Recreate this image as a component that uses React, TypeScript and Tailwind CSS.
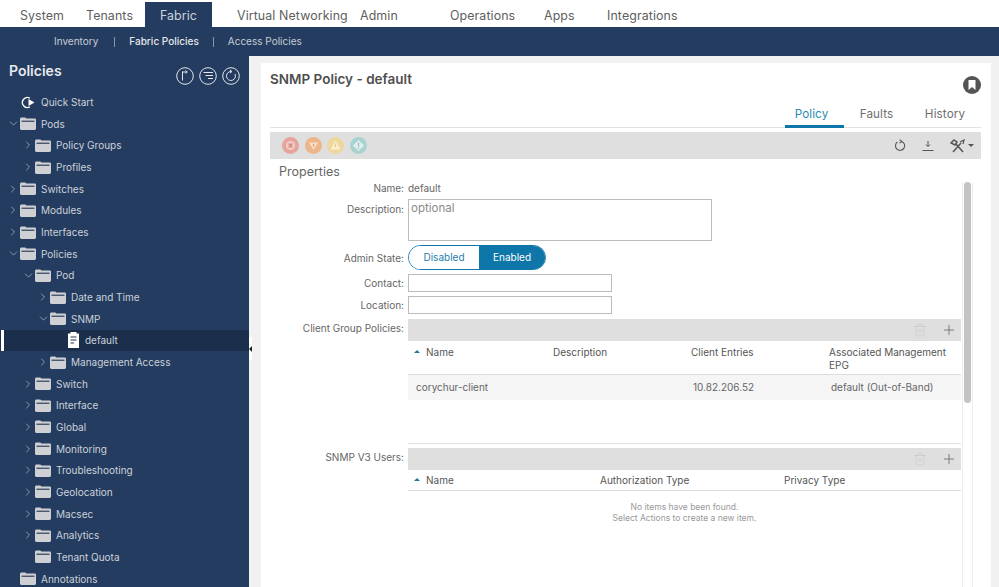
import React from "react";
import { ChevronRight, ChevronDown, Plus, Trash2 } from "lucide-react";

function Folder() {
  return (
    <svg width="16" height="13" viewBox="0 0 16 13" className="shrink-0">
      <path d="M0 2.2 C0 1 .6.4 1.6.4 H5.2 L6.6 1.6 H14.6 C15.5 1.6 16 2.1 16 3 V11.6 C16 12.5 15.5 13 14.6 13 H1.4 C.5 13 0 12.5 0 11.6 Z" fill="#cfd0d4" />
      <rect x="1.5" y="3.6" width="13" height="1.3" fill="#3c4c66" />
    </svg>
  );
}

type Row = { label: string; depth: number; chev?: "r" | "d"; kind?: "folder" | "start" | "doc"; active?: boolean };

const rows: Row[] = [
  { label: "Quick Start", depth: 1, kind: "start" },
  { label: "Pods", depth: 1, chev: "d" },
  { label: "Policy Groups", depth: 2, chev: "r" },
  { label: "Profiles", depth: 2, chev: "r" },
  { label: "Switches", depth: 1, chev: "r" },
  { label: "Modules", depth: 1, chev: "r" },
  { label: "Interfaces", depth: 1, chev: "r" },
  { label: "Policies", depth: 1, chev: "d" },
  { label: "Pod", depth: 2, chev: "d" },
  { label: "Date and Time", depth: 3, chev: "r" },
  { label: "SNMP", depth: 3, chev: "d" },
  { label: "default", depth: 4, kind: "doc", active: true },
  { label: "Management Access", depth: 3, chev: "r" },
  { label: "Switch", depth: 2, chev: "r" },
  { label: "Interface", depth: 2, chev: "r" },
  { label: "Global", depth: 2, chev: "r" },
  { label: "Monitoring", depth: 2, chev: "r" },
  { label: "Troubleshooting", depth: 2, chev: "r" },
  { label: "Geolocation", depth: 2, chev: "r" },
  { label: "Macsec", depth: 2, chev: "r" },
  { label: "Analytics", depth: 2, chev: "r" },
  { label: "Tenant Quota", depth: 2 },
  { label: "Annotations", depth: 1 },
];

const indent: Record<number, string> = { 1: "pl-[7px]", 2: "pl-[22px]", 3: "pl-[37px]", 4: "pl-[52px]" };

function TreeRow({ r }: { r: Row }) {
  return (
    <div className={`relative flex items-center h-[21.67px] shrink-0 ${indent[r.depth]} ${r.active ? "bg-[#1b2f4d]" : ""}`}>
      {r.active && <div className="absolute left-[1px] top-0 bottom-0 w-[3px] bg-white" />}
      <div className="w-[13px] shrink-0 flex items-center">
        {r.chev === "r" && <ChevronRight size={12} strokeWidth={1.3} color="#c3c9d3" />}
        {r.chev === "d" && <ChevronDown size={13} strokeWidth={1.2} color="#c3c9d3" />}
      </div>
      {r.kind === "start" ? (
        <svg width="16" height="13" viewBox="0 0 16 13" fill="none" className="shrink-0">
          <path d="M10 2.2 A5 5 0 1 0 10 10.8" stroke="#fff" strokeWidth="1.3" />
          <path d="M8.5 3 L14.5 6.5 L8.5 10 Z" fill="#fff" />
        </svg>
      ) : r.kind === "doc" ? (
        <div className="w-[16px] flex justify-center shrink-0">
          <svg width="11" height="16" viewBox="0 0 11 16">
            <path d="M0 1.5 H2.5 V0 H8.5 V1.5 H11 V16 H0 Z" fill="#fff" />
            <path d="M2.5 5 H8.5 M2.5 8 H8.5 M2.5 11 H6" stroke="#24395a" strokeWidth="1.2" />
          </svg>
        </div>
      ) : (
        <Folder />
      )}
      <span className={`text-[10px] text-[#ccd2db] pt-px ${r.kind === "doc" ? "ml-[4px]" : "ml-[5px]"}`}>{r.label}</span>
    </div>
  );
}

function CircleIcon({ children }: { children: React.ReactNode }) {
  return (
    <svg width="18" height="18" viewBox="0 0 18 18" fill="none" stroke="#e3e6ea" strokeWidth="1">
      <circle cx="9" cy="9" r="8.3" />
      {children}
    </svg>
  );
}

function Fault({ color, children }: { color: string; children: React.ReactNode }) {
  return (
    <svg width="17" height="17" viewBox="0 0 17 17">
      <circle cx="8.5" cy="8.5" r="8.5" fill={color} />
      {children}
    </svg>
  );
}

function Bar() {
  return (
    <div className="h-[22px] bg-[#dfdfdf] flex items-center justify-end pr-[4px] gap-[14px]">
      <Trash2 size={14} strokeWidth={1.2} color="#c8c8c8" />
      <Plus size={16} strokeWidth={1.2} color="#666" />
    </div>
  );
}

function FormRow({ label, h, lead, className, children }: { label: string; h: string; lead?: string; className?: string; children?: React.ReactNode }) {
  return (
    <div className={`flex ${h} ${className ?? ""}`}>
      <div className={`w-[138px] pr-[4px] text-right text-[10px] text-[#666] shrink-0 ${lead ?? "leading-[18px]"}`}>{label}</div>
      <div className="flex-1 min-w-0">{children}</div>
    </div>
  );
}

function Th({ w, sort, children }: { w: string; sort?: boolean; children: React.ReactNode }) {
  return (
    <div className={`${w} shrink-0 flex text-[10px] text-[#555] leading-[13px]`}>
      {sort && <span className="w-[6px] h-[3px] mt-[4px] ml-[6px] mr-[6px] border-x-[3px] border-x-transparent border-b-[3px] border-b-[#24789f]" />}
      <span>{children}</span>
    </div>
  );
}

export default function App() {
  return (
    <div className="w-[999px] h-[587px] overflow-hidden bg-white flex flex-col font-['Inter',sans-serif]">
      <div className="h-[27px] flex shrink-0 bg-white text-[12.4px] text-[#5e5e5e] tracking-[0.1px]">
        <div className="w-[86px] pl-[20px] pt-[7px]">System</div>
        <div className="w-[59px] pt-[7px]">Tenants</div>
        <div className="w-[67px] mt-[2px] pt-[5px] text-center bg-[#243c5f] text-[#ccd2db]">Fabric</div>
        <div className="w-[148px] pl-[25px] pt-[7px] whitespace-nowrap">Virtual Networking</div>
        <div className="w-[90px] pt-[7px]">Admin</div>
        <div className="w-[94px] pt-[7px]">Operations</div>
        <div className="w-[63px] pt-[7px]">Apps</div>
        <div className="pt-[7px]">Integrations</div>
      </div>
      <div className="h-[29px] shrink-0 flex items-center text-[10px] text-[#c6ccd6] pl-[54px] bg-[#243c5f]">
        <span>Inventory</span>
        <span className="w-px h-[10px] bg-[#8a98ad] ml-[16px] mr-[14px]" />
        <span className="font-medium text-[#e4e7eb]">Fabric Policies</span>
        <span className="w-px h-[10px] bg-[#8a98ad] ml-[14px] mr-[14px]" />
        <span>Access Policies</span>
      </div>
      <div className="flex-1 min-h-0 flex">
        <div className="w-[249px] shrink-0 flex flex-col bg-[#243c5f]">
          <div className="h-[35.3px] shrink-0 flex justify-between pl-[9px] pr-[9px] pt-[5px]">
            <span className="text-[14px] font-semibold text-[#e6e9ed] leading-[20px]">Policies</span>
            <div className="flex gap-[5px] pt-[6px]">
              <CircleIcon><path d="M6.5 13.5 V4.5 M6.5 5 H11 M9.5 3.6 L11.3 5 L9.5 6.4" /></CircleIcon>
              <CircleIcon><path d="M4.5 5.5 H14 M6.5 8.5 H14 M9 11.5 H14" /></CircleIcon>
              <CircleIcon><path d="M9 4.5 A4.5 4.5 0 1 0 13 7" /><path d="M8 3 L10 4.5 L8 6" /></CircleIcon>
            </div>
          </div>
          <div className="flex flex-col">
            {rows.map((r) => <TreeRow key={r.label} r={r} />)}
          </div>
        </div>
        <div className="flex-1 min-w-0 bg-[#f1f1f1] pl-[12px] pr-[8px] flex relative">
          <div className="absolute left-0 top-[281px] w-[3px] h-[23px] bg-white flex items-center">
            <span className="w-0 h-0 border-y-[3px] border-y-transparent border-r-[3px] border-r-[#222]" />
          </div>
          <div className="flex-1 min-w-0 bg-white pl-[9px] pr-[10px] relative flex flex-col mt-[7px]">
            <div className="h-[34px] pt-[6px] text-[13.5px] font-semibold text-[#4f4f4f] leading-[20px] shrink-0 box-content">SNMP Policy - default</div>
            <svg width="18" height="18" viewBox="0 0 18 18" className="absolute right-[10px] top-[13px]">
              <circle cx="9" cy="9" r="9" fill="#555" />
              <path d="M5.5 4 H12.5 V14 L9 11 L5.5 14 Z" fill="#fff" />
            </svg>
            <div className="h-[25px] shrink-0 flex justify-end border-b border-[#e3e3e3] text-[11.7px] leading-[16px] text-[#6e6e6e] tracking-[0.1px]">
              <div className="w-[59px] text-center text-[#2b8ab5] border-b-[3px] border-[#0e76a8] h-[25px] pt-[3px] pr-[6px]">Policy</div>
              <div className="w-[65px] text-center pt-[3px]">Faults</div>
              <div className="w-[72px] text-center pt-[3px]">History</div>
            </div>
            <div className="mt-[4px] h-[27px] shrink-0 bg-[#dfdfdf] flex items-center pl-[12px] pr-[7px]">
              <div className="flex gap-[5.5px]">
                <Fault color="#e6a49c"><circle cx="8.5" cy="8.5" r="4.6" fill="#f0cbc6" /><path d="M6.6 6.6 L10.4 10.4 M10.4 6.6 L6.6 10.4" stroke="#d98a80" strokeWidth="1.4" /></Fault>
                <Fault color="#ecb68a"><path d="M4 5.5 H13 L8.5 13 Z" fill="#f6e0cc" /><path d="M8.5 6.8 V9.6" stroke="#e4a26a" strokeWidth="1.3" /></Fault>
                <Fault color="#eed79a"><path d="M8.5 3.5 L13.5 12.5 H3.5 Z" fill="#f8efd4" /><path d="M8.5 6.5 V10" stroke="#e8cc78" strokeWidth="1.3" /></Fault>
                <Fault color="#a9d3d0"><path d="M8.5 3 L14 8.5 L8.5 14 L3 8.5 Z" fill="#e2efee" /><path d="M8.5 5.5 V9.5 M8.5 10.5 V11.8" stroke="#8cc4bf" strokeWidth="1.3" /></Fault>
              </div>
              <div className="ml-auto flex items-center gap-[16px] text-[#555]">
                <svg width="12" height="13" viewBox="0 0 12 13" fill="none" stroke="#555" strokeWidth="1.1">
                  <path d="M7.6 2.4 A4.6 4.6 0 1 1 3.4 3" />
                  <path d="M5.6 .6 L7.8 2.4 L5.6 4" />
                </svg>
                <svg width="12" height="12" viewBox="0 0 12 12" fill="none" stroke="#555" strokeWidth="1">
                  <path d="M6 1 V6 M4 4.5 L6 6.7 L8 4.5 M.5 10.5 H11.5" />
                </svg>
                <div className="flex items-center gap-[2px]">
                  <svg width="16" height="14" viewBox="0 0 16 14" fill="none" stroke="#555">
                    <path d="M3 13 L11 4 M1 4 L4 1 L7 3 L5 6 Z M13 13 L6 5" strokeWidth="1.5" />
                    <path d="M10 3 L14 1 L13 5" strokeWidth="1.2" />
                  </svg>
                  <span className="w-0 h-0 border-x-[3px] border-x-transparent border-t-[3px] border-t-[#555]" />
                </div>
              </div>
            </div>
            <div className="h-[23px] shrink-0 pl-[9px] pt-[5px] text-[12.5px] leading-[16px] text-[#666]">Properties</div>
            <div className="relative flex-1 min-h-0 overflow-hidden flex">
              <div className="flex-1 min-w-0 pr-[20px]">
                <FormRow label="Name:" h="h-[17px]" lead="leading-[13px]">
                  <div className="text-[10px] text-[#666] leading-[13px]">default</div>
                </FormRow>
                <FormRow label="Description:" h="h-[46px]" lead="leading-[20px]">
                  <div className="w-[304px] h-[42px] border border-[#bcbcbc] pl-[2px] text-[11.5px] leading-[16px] text-[#8a8a8a]">optional</div>
                </FormRow>
                <FormRow label="Admin State:" h="h-[29px]" lead="leading-[26px]">
                  <div className="flex w-[138px] h-[25px] rounded-full overflow-hidden border border-[#0e76a8] text-[10px]">
                    <div className="w-[70px] bg-white text-[#1f7fae] flex items-center justify-center">Disabled</div>
                    <div className="flex-1 bg-[#0e76a8] text-white flex items-center justify-center">Enabled</div>
                  </div>
                </FormRow>
                <FormRow label="Contact:" h="h-[22px]">
                  <div className="w-[204px] h-[18px] border border-[#bcbcbc] bg-white" />
                </FormRow>
                <FormRow label="Location:" h="h-[23px]">
                  <div className="w-[204px] h-[18px] border border-[#bcbcbc] bg-white" />
                </FormRow>
                <FormRow label="Client Group Policies:" h="h-[129px]">
                  <div className="border-b border-[#e3e3e3] h-[125px]">
                    <Bar />
                    <div className="flex h-[34px] pt-[5px] border-b border-[#dcdcdc]">
                      <Th w="w-[145px]" sort>Name</Th>
                      <Th w="w-[138px]">Description</Th>
                      <Th w="w-[138px]">Client Entries</Th>
                      <Th w="w-[125px]">Associated Management EPG</Th>
                    </div>
                    <div className="flex h-[25px] items-center bg-[#f5f5f5] text-[10px] text-[#666]">
                      <div className="w-[285px] pl-[8px]">corychur-client</div>
                      <div className="w-[138px]">10.82.206.52</div>
                      <div>default (Out-of-Band)</div>
                    </div>
                  </div>
                </FormRow>
                <FormRow label="SNMP V3 Users:" h="h-[110px]">
                  <Bar />
                  <div className="flex h-[21px] items-center border-b border-[#dcdcdc]">
                    <Th w="w-[192px]" sort>Name</Th>
                    <Th w="w-[184px]">Authorization Type</Th>
                    <Th w="w-[120px]">Privacy Type</Th>
                  </div>
                  <div className="pt-[11px] text-center text-[8.5px] leading-[11px] text-[#999]">
                    <div>No items have been found.</div>
                    <div>Select Actions to create a new item.</div>
                  </div>
                </FormRow>
              </div>
              <div className="absolute right-[8px] top-0 bottom-0 w-[11px] border-x border-[#eeeeee]">
                <div className="mx-auto w-[7px] h-[221px] rounded bg-[#c4c4c4]" />
              </div>
            </div>
          </div>
        </div>
      </div>
    </div>
  );
}
